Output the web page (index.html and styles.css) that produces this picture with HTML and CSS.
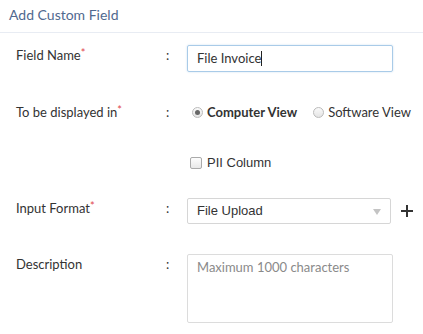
FILE: index.html
```html
<!DOCTYPE html>
<html lang="en">
<head>
  <meta charset="UTF-8">
  <meta name="viewport" content="width=device-width, initial-scale=1.0">
  <title>Add Custom Field</title>
  <link rel="stylesheet" href="styles.css">
</head>
<body>
  <div class="panel">
    <div class="panel-header">Add Custom Field</div>

    <div class="form">
      <div class="row row-name">
        <div class="label">Field Name<span class="req">*</span></div>
        <div class="colon">:</div>
        <div class="field">
          <div class="text-input focused">File Invoice<span class="caret"></span></div>
        </div>
      </div>

      <div class="row row-display">
        <div class="label">To be displayed in<span class="req">*</span></div>
        <div class="colon">:</div>
        <div class="field options">
          <label class="radio checked"><span class="radio-dot"></span><b>Computer View</b></label>
          <label class="radio"><span class="radio-dot"></span>Software View</label>
        </div>
      </div>

      <div class="row row-pii">
        <div class="label"></div>
        <div class="colon"></div>
        <div class="field">
          <label class="check"><span class="check-box"></span>PII Column</label>
        </div>
      </div>

      <div class="row row-format">
        <div class="label">Input Format<span class="req">*</span></div>
        <div class="colon">:</div>
        <div class="field field-inline">
          <div class="select">File Upload<span class="arrow"></span></div>
          <span class="plus"></span>
        </div>
      </div>

      <div class="row row-desc">
        <div class="label">Description</div>
        <div class="colon">:</div>
        <div class="field">
          <div class="textarea">Maximum 1000 characters</div>
        </div>
      </div>
    </div>
  </div>
</body>
</html>
```

FILE: styles.css
```css
body {
  margin: 0;
  background-color: white;
  font-family: Lato, "Open Sans", sans-serif;
  font-size: 13px;
  color: #333;
}
.panel-header {
  height: 32px;
  padding-left: 9px;
  line-height: 30px;
  font-size: 14px;
  color: #50698f;
  border-bottom: 1px solid #e8ecf3;
}
.form {
  padding-left: 16px;
}
.row {
  display: flex;
  align-items: flex-start;
  line-height: 20px;
}
.label {
  width: 150px;
}
.req {
  color: #e0474c;
  position: relative;
  top: -3px;
  font-size: 11px;
}
.colon {
  width: 21px;
}
.row-name {
  margin-top: 12px;
}
.row-display {
  margin-top: 30px;
}
.row-pii {
  margin-top: 30px;
}
.row-format {
  margin-top: 25px;
}
.row-desc {
  margin-top: 30px;
}
.text-input {
  box-sizing: border-box;
  width: 206px;
  height: 27px;
  padding: 0 9px;
  line-height: 25px;
  border: 1px solid #a9cbe8;
  border-radius: 2px;
  box-shadow: 0 0 2px rgba(120, 170, 220, 0.4);
}
.caret {
  display: inline-block;
  width: 1px;
  height: 15px;
  background-color: #222;
  vertical-align: -3px;
}
.options {
  display: flex;
  gap: 16px;
  margin-left: 5px;
}
.radio {
  display: flex;
  align-items: center;
}
.radio b {
  font-weight: bold;
}
.radio-dot {
  box-sizing: border-box;
  width: 11px;
  height: 11px;
  border-radius: 50%;
  border: 1px solid #bbb;
  background: linear-gradient(#fafafa, #e4e4e4);
  margin-right: 4px;
  position: relative;
}
.radio.checked .radio-dot::after {
  content: "";
  position: absolute;
  left: 2px;
  top: 2px;
  width: 5px;
  height: 5px;
  border-radius: 50%;
  background-color: #666;
}
.check {
  display: flex;
  align-items: center;
  font-family: "Liberation Sans", Arial, sans-serif;
  margin-left: 3px;
}
.check-box {
  box-sizing: border-box;
  width: 12px;
  height: 12px;
  border: 1px solid #aaa;
  border-radius: 2px;
  background: linear-gradient(#fdfdfd, #e8e8e8);
  margin-right: 5px;
}
.field-inline {
  display: flex;
  align-items: center;
}
.select {
  box-sizing: border-box;
  width: 204px;
  height: 26px;
  padding: 0 9px;
  line-height: 24px;
  border: 1px solid #d6d6d6;
  border-radius: 2px;
  font-family: "Liberation Sans", Arial, sans-serif;
  position: relative;
}
.arrow {
  position: absolute;
  right: 9px;
  top: 10px;
  border-left: 4px solid transparent;
  border-right: 4px solid transparent;
  border-top: 6px solid #c4c4c4;
}
.plus {
  width: 12px;
  height: 12px;
  margin-left: 10px;
  position: relative;
}
.plus::before,
.plus::after {
  content: "";
  position: absolute;
  background-color: #333;
}
.plus::before {
  left: 0;
  top: 5px;
  width: 12px;
  height: 2px;
}
.plus::after {
  left: 5px;
  top: 0;
  width: 2px;
  height: 12px;
}
.textarea {
  box-sizing: border-box;
  width: 206px;
  height: 69px;
  padding: 2px 9px;
  border: 1px solid #dcdcdc;
  border-radius: 2px;
  color: #8a8a8a;
}
```
